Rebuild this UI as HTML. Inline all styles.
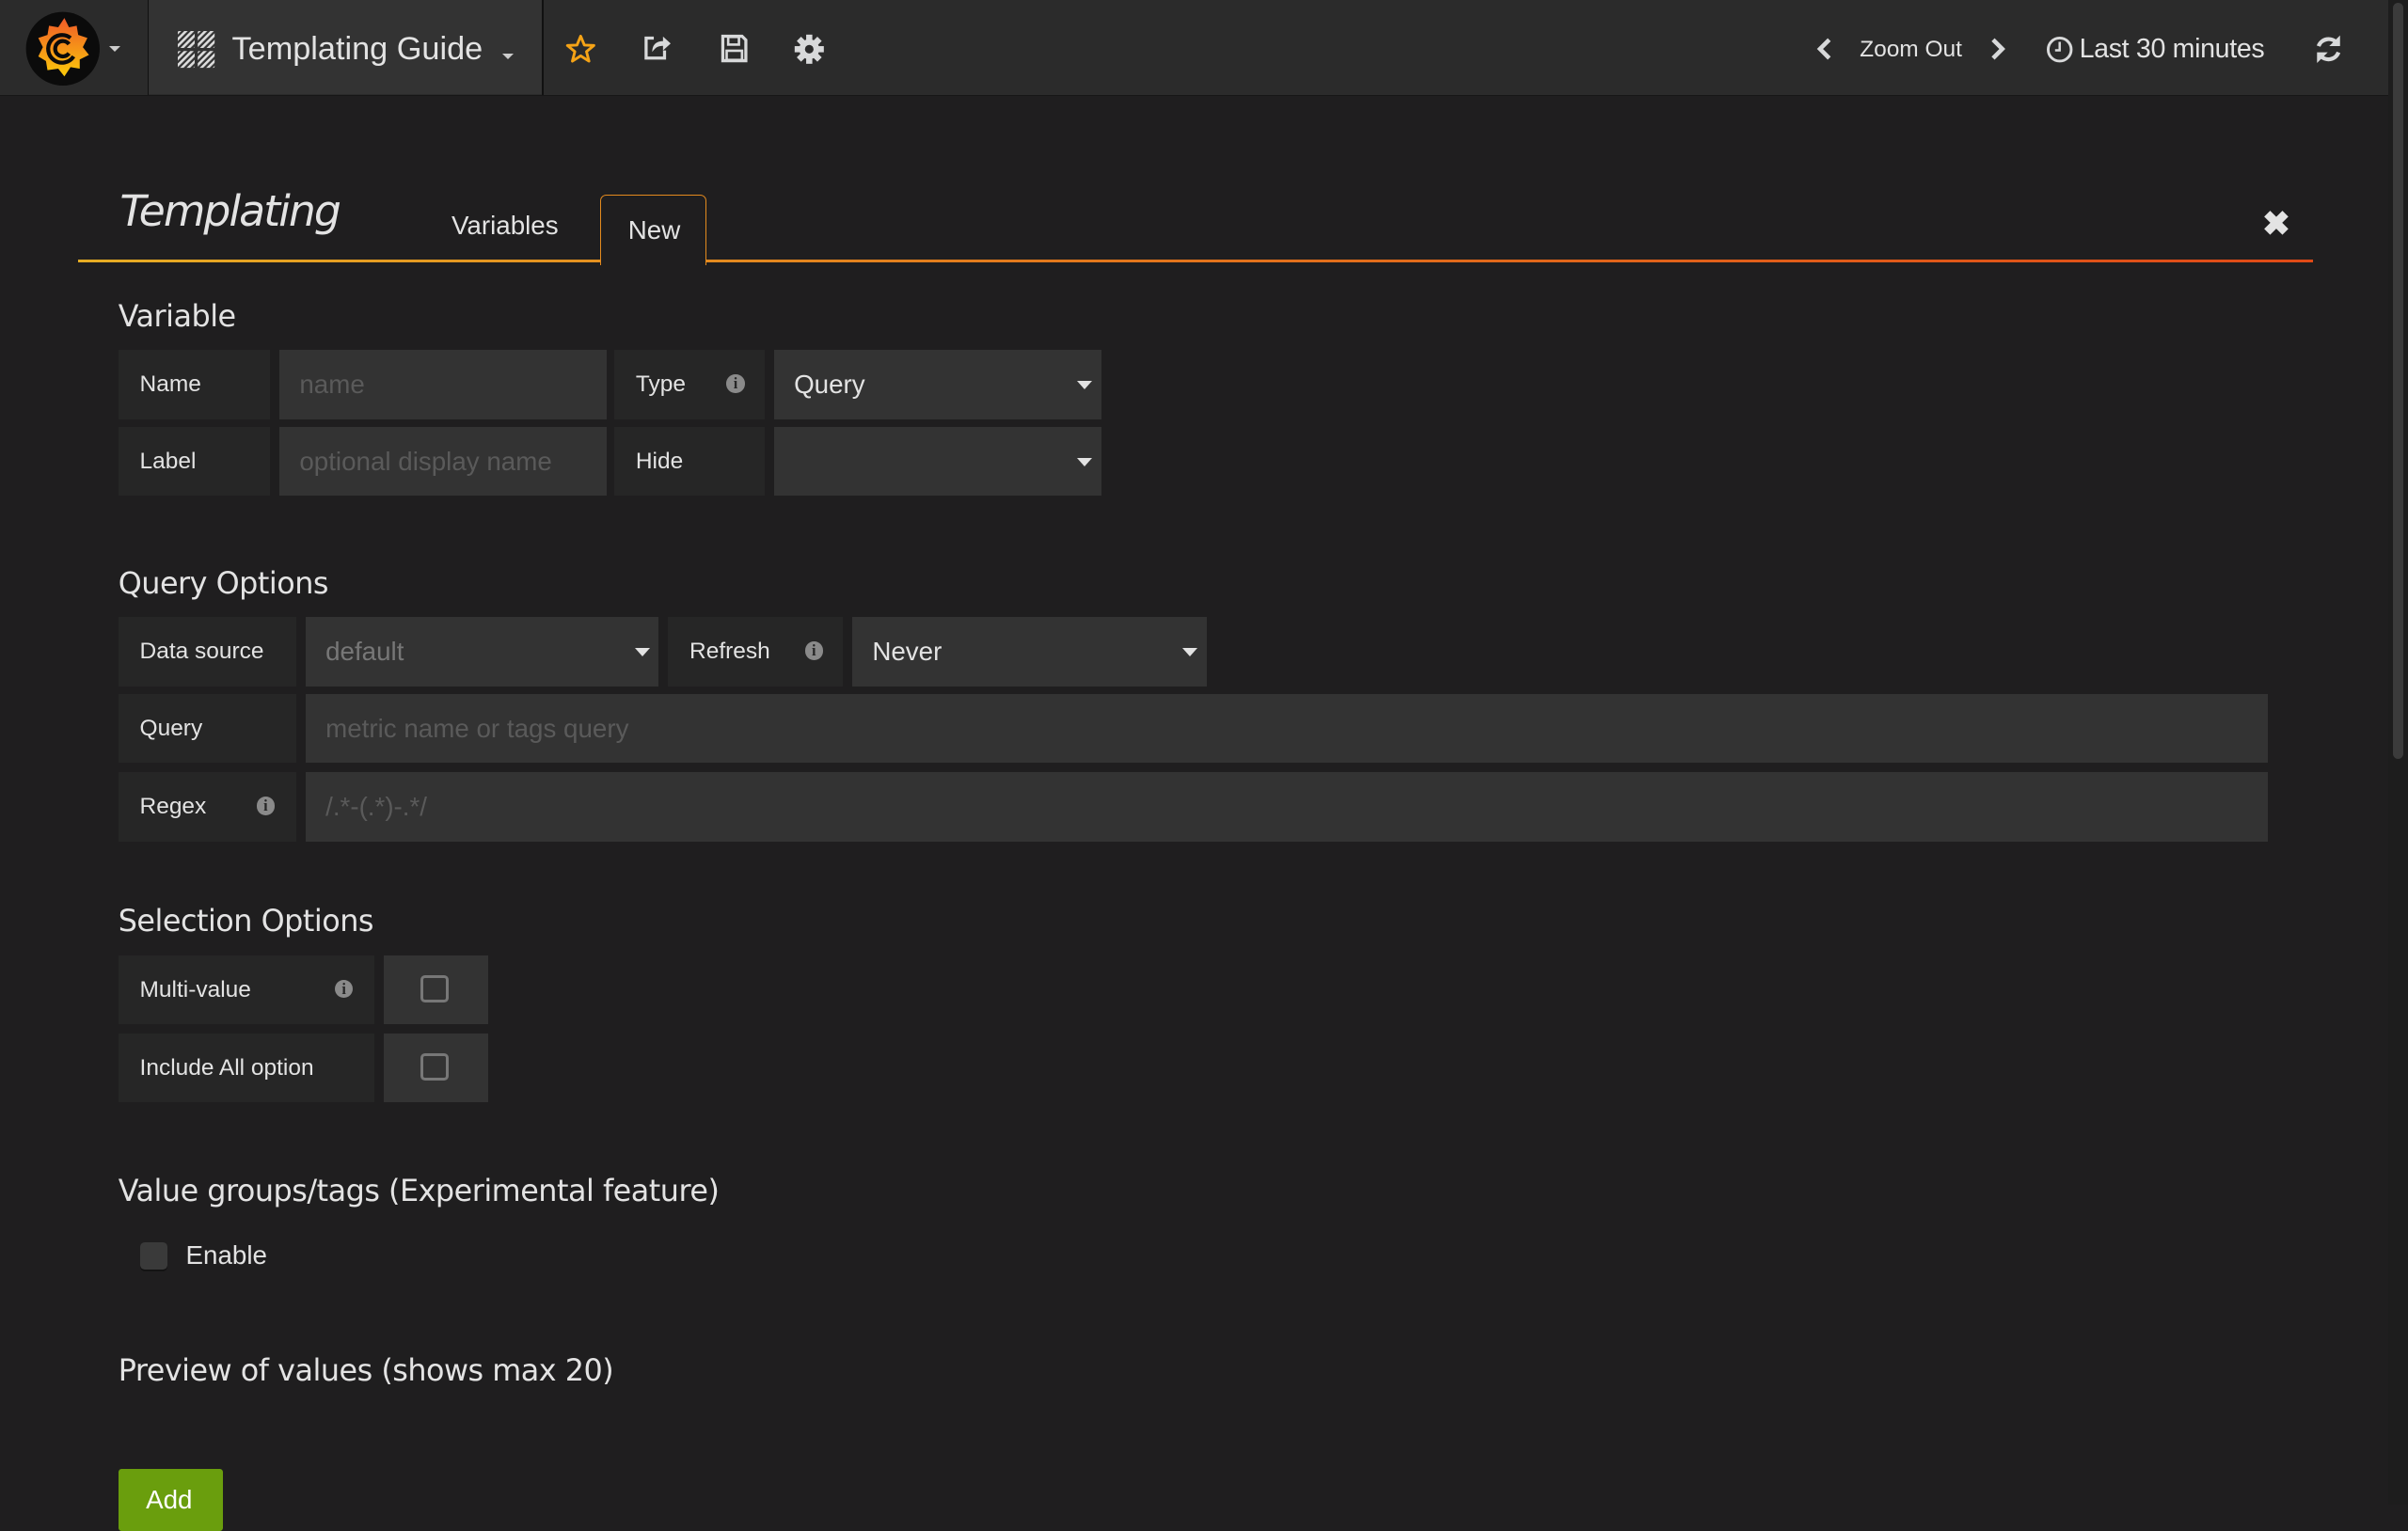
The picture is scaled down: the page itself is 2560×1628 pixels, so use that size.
<!DOCTYPE html>
<html><head><meta charset="utf-8"><style>
html{zoom:1.632653}
body{margin:0;width:1568px;height:980px;overflow:hidden;background:#1f1e1f;font-family:"Liberation Sans",Arial,sans-serif;color:#d8d9da;position:relative}
.a{position:absolute}
.nav{left:0;top:0;width:1568px;height:62px;background:#2b2b2b;border-bottom:1px solid #161616}
.lbl{position:absolute;background:#262626;color:#e3e3e3;font-size:15px;line-height:45px;padding-left:14px;box-sizing:border-box;height:45px}
.inp{position:absolute;background:#333;color:#666;font-size:17px;line-height:45px;padding-left:13px;box-sizing:border-box;height:45px}
.sel{color:#e3e3e3}
.caret{position:absolute;right:6px;top:20px;width:0;height:0;border-left:5px solid transparent;border-right:5px solid transparent;border-top:6px solid #e3e3e3}
.info{position:absolute;width:12px;height:12px;border-radius:50%;background:#8a8a8a;color:#262626;font-size:10px;line-height:12px;text-align:center;font-weight:bold;font-family:"Liberation Serif",serif}
h3{position:absolute;margin:0;font-weight:normal;font-size:19.5px;color:#e3e3e3;left:77px;font-family:"DejaVu Sans","Liberation Sans",sans-serif;letter-spacing:-0.3px}
.cb{position:absolute;width:18px;height:18px;border:2px solid #777;border-radius:3px;box-sizing:border-box}
</style></head><body>
<div class="a nav"></div>
<div class="a" style="left:96px;top:0;width:1px;height:62px;background:#111"></div>
<div class="a" style="left:97px;top:0;width:256px;height:61px;background:#333"></div>
<div class="a" style="left:353px;top:0;width:1px;height:62px;background:#111"></div>
<svg class="a" style="left:16px;top:7px" width="52" height="50" viewBox="0 0 52 50">
<ellipse cx="25" cy="25" rx="24" ry="24" fill="#0b0b0b"/>
<defs><linearGradient id="g" x1="0" y1="0" x2="0" y2="1"><stop offset="0" stop-color="#f05a28"/><stop offset="1" stop-color="#fbca0a"/></linearGradient></defs>
<path d="M26 5 L29 11 L34 10 L35 16 L41 18 L38 24 L42 29 L36 32 L36 38 L30 37 L26 43 L22 38 L15 39 L14 33 L9 30 L12 24 L9 18 L15 16 L16 10 L22 11Z" fill="url(#g)"/>
<path d="M30 18 A9 9 0 1 0 32 30 M29 22 A5 5 0 1 0 29 28" fill="none" stroke="#0b0b0b" stroke-width="2.6"/>
</svg>
<div class="a" style="left:71px;top:30px;border-left:4px solid transparent;border-right:4px solid transparent;border-top:4px solid #ccc"></div>
<svg class="a" style="left:116px;top:20px" width="25" height="25"><defs><pattern id="h" width="3" height="3" patternUnits="userSpaceOnUse" patternTransform="rotate(45)"><rect width="1.6" height="3" fill="#ddd"/></pattern></defs><g fill="url(#h)"><rect x="0" y="0" width="11" height="11" rx="1"/><rect x="13" y="0" width="11" height="11" rx="1"/><rect x="0" y="13" width="11" height="11" rx="1"/><rect x="13" y="13" width="11" height="11" rx="1"/></g></svg>
<div class="a" style="left:151px;top:20px;font-size:21px;color:#e3e3e3">Templating Guide</div>
<div class="a" style="left:327px;top:35px;border-left:4px solid transparent;border-right:4px solid transparent;border-top:4px solid #ccc"></div>
<svg class="a" style="left:368px;top:22px" width="20" height="20" viewBox="0 0 20 20"><path d="M10 1.5 L12.4 7.3 L18.6 7.6 L13.8 11.6 L15.4 17.8 L10 14.3 L4.6 17.8 L6.2 11.6 L1.4 7.6 L7.6 7.3Z" fill="none" stroke="#f5a316" stroke-width="1.8" stroke-linejoin="round"/></svg>
<svg class="a" style="left:418px;top:21px" width="20" height="20" viewBox="0 0 20 20"><path d="M8 4 H3 V17 H15 V12" fill="none" stroke="#d8d9da" stroke-width="2"/><path d="M7 13 C7 8 10 6 14 6 V3 L19 7.5 L14 12 V9 C11 9 9 10 7 13Z" fill="#d8d9da"/></svg>
<svg class="a" style="left:469px;top:22px" width="18" height="19" viewBox="0 0 18 19"><path d="M1.5 1.5 H14 L16.5 4 V17.5 H1.5Z" fill="none" stroke="#d8d9da" stroke-width="2"/><rect x="5" y="2" width="7" height="5" fill="none" stroke="#d8d9da" stroke-width="1.6"/><rect x="4" y="11" width="10" height="6" fill="none" stroke="#d8d9da" stroke-width="1.6"/></svg>
<svg class="a" style="left:517px;top:22px" width="20" height="20" viewBox="0 0 20 20"><g fill="#d8d9da"><circle cx="10" cy="10" r="6.5"/><rect x="8" y="0.5" width="4" height="19"/><rect x="0.5" y="8" width="19" height="4"/><rect x="8" y="0.5" width="4" height="19" transform="rotate(45 10 10)"/><rect x="8" y="0.5" width="4" height="19" transform="rotate(-45 10 10)"/></g><circle cx="10" cy="10" r="2.8" fill="#2b2b2b"/></svg>
<svg class="a" style="left:1182px;top:24px" width="12" height="16"><path d="M9 2 L3 8 L9 14" fill="none" stroke="#d8d9da" stroke-width="2.8"/></svg>
<div class="a" style="left:1211px;top:24px;font-size:15px;color:#e3e3e3">Zoom Out</div>
<svg class="a" style="left:1295px;top:24px" width="12" height="16"><path d="M3 2 L9 8 L3 14" fill="none" stroke="#d8d9da" stroke-width="2.8"/></svg>
<svg class="a" style="left:1332px;top:23px" width="18" height="18"><circle cx="9" cy="9" r="7.5" fill="none" stroke="#d8d9da" stroke-width="1.8"/><path d="M9 4 V9.5 H6" fill="none" stroke="#d8d9da" stroke-width="1.5"/></svg>
<div class="a" style="left:1354px;top:22px;font-size:17.5px;color:#e3e3e3;letter-spacing:-0.2px">Last 30 minutes</div>
<svg class="a" style="left:1507px;top:22px" width="19" height="20" viewBox="0 0 19 20"><path d="M3 8 A7 7 0 0 1 15 6" fill="none" stroke="#d8d9da" stroke-width="2.6"/><path d="M17 1 V8 H10Z" fill="#d8d9da"/><path d="M16 12 A7 7 0 0 1 4 14" fill="none" stroke="#d8d9da" stroke-width="2.6"/><path d="M2 19 V12 H9Z" fill="#d8d9da"/></svg>
<div class="a" style="left:1555px;top:0;width:13px;height:980px;background:#1d1d1d"></div>
<div class="a" style="left:1558px;top:2px;width:7px;height:492px;background:#3b3b3b;border-radius:4px"></div>

<div class="a" style="left:78px;top:121px;font-size:28px;font-style:italic;color:#e3e3e3;font-family:'DejaVu Sans','Liberation Sans',sans-serif;letter-spacing:-1.2px">Templating</div>
<div class="a" style="left:294px;top:137px;font-size:17px;color:#e3e3e3">Variables</div>
<div class="a" style="left:51px;top:169px;width:1455px;height:2px;background:linear-gradient(90deg,#e6ad24,#e27c1d 40%,#e04a17)"></div>
<div class="a" style="left:391px;top:127px;width:68px;height:45px;border:1px solid #e38a1e;border-bottom:none;border-radius:4px 4px 0 0;background:#1f1e1f"></div>
<div class="a" style="left:409px;top:140px;font-size:17px;color:#e3e3e3">New</div>
<div class="a" style="left:1473px;top:133px;font-size:22px;font-weight:bold;color:#e3e3e3">✖</div>

<h3 style="top:194px">Variable</h3>
<div class="lbl" style="left:77px;top:228px;width:99px">Name</div>
<div class="inp" style="left:182px;top:228px;width:213px;color:#5a5a5a">name</div>
<div class="lbl" style="left:400px;top:228px;width:98px">Type<span class="info" style="left:73px;top:16px">i</span></div>
<div class="inp sel" style="left:504px;top:228px;width:213px">Query<span class="caret"></span></div>
<div class="lbl" style="left:77px;top:278px;width:99px">Label</div>
<div class="inp" style="left:182px;top:278px;width:213px;color:#5a5a5a">optional display name</div>
<div class="lbl" style="left:400px;top:278px;width:98px">Hide</div>
<div class="inp sel" style="left:504px;top:278px;width:213px"><span class="caret"></span></div>

<h3 style="top:368px">Query Options</h3>
<div class="lbl" style="left:77px;top:402px;width:116px">Data source</div>
<div class="inp" style="left:199px;top:402px;width:230px;color:#777">default<span class="caret"></span></div>
<div class="lbl" style="left:435px;top:402px;width:114px">Refresh<span class="info" style="left:89px;top:16px">i</span></div>
<div class="inp sel" style="left:555px;top:402px;width:231px">Never<span class="caret"></span></div>
<div class="lbl" style="left:77px;top:452px;width:116px">Query</div>
<div class="inp" style="left:199px;top:452px;width:1278px;color:#5a5a5a">metric name or tags query</div>
<div class="lbl" style="left:77px;top:503px;width:116px">Regex<span class="info" style="left:90px;top:16px">i</span></div>
<div class="inp" style="left:199px;top:503px;width:1278px;color:#5a5a5a">/.*-(.*)-.*/</div>

<h3 style="top:588px">Selection Options</h3>
<div class="lbl" style="left:77px;top:622px;width:167px">Multi-value<span class="info" style="left:141px;top:16px">i</span></div>
<div class="inp" style="left:250px;top:622px;width:68px"><span class="cb" style="left:24px;top:13px"></span></div>
<div class="lbl" style="left:77px;top:673px;width:167px">Include All option</div>
<div class="inp" style="left:250px;top:673px;width:68px"><span class="cb" style="left:24px;top:13px"></span></div>

<h3 style="top:764px">Value groups/tags (Experimental feature)</h3>
<div class="a" style="left:91px;top:809px;width:18px;height:18px;background:#3a3a3a;border-radius:3px;box-shadow:0 1px 0 #111"></div>
<div class="a" style="left:121px;top:808px;font-size:17px;color:#e3e3e3">Enable</div>

<h3 style="top:881px">Preview of values (shows max 20)</h3>
<div class="a" style="left:77px;top:957px;width:68px;height:40px;background:#6a9e0d;border-radius:2px"></div>
<div class="a" style="left:95px;top:967px;font-size:17px;color:#fff">Add</div>
</body></html>
